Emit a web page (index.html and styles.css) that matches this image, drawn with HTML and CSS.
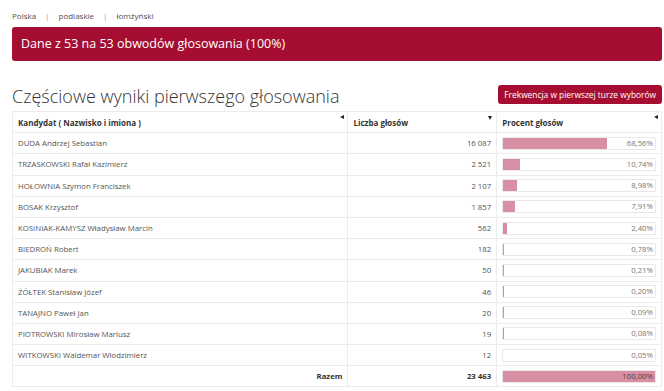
FILE: index.html
```html
<!DOCTYPE html>
<html lang="pl">
<head>
<meta charset="utf-8">
<link rel="stylesheet" href="styles.css">
</head>
<body>
<div class="page">
  <nav class="crumbs"><span>Polska</span><span class="sep">|</span><span>podlaskie</span><span class="sep">|</span><span>łomżyński</span></nav>
  <div class="banner">Dane z 53 na 53 obwodów głosowania (100%)</div>
  <div class="titlebar">
    <h1>Częściowe wyniki pierwszego głosowania</h1>
    <a class="btn">Frekwencja w pierwszej turze wyborów</a>
  </div>
  <table class="results">
    <colgroup><col class="c1"><col class="c2"><col class="c3"></colgroup>
    <thead>
      <tr>
        <th><span>Kandydat ( Nazwisko i imiona )</span><i class="arr left"></i></th>
        <th><span>Liczba głosów</span><i class="arr down"></i></th>
        <th><span>Procent głosów</span><i class="arr left"></i></th>
      </tr>
    </thead>
    <tbody>
      <tr><td>DUDA Andrzej Sebastian</td><td class="num">16 087</td><td><div class="bar"><div class="fill" style="width:68.56%"></div><span>68,56%</span></div></td></tr>
      <tr><td>TRZASKOWSKI Rafał Kazimierz</td><td class="num">2 521</td><td><div class="bar"><div class="fill" style="width:10.74%"></div><span>10,74%</span></div></td></tr>
      <tr><td>HOŁOWNIA Szymon Franciszek</td><td class="num">2 107</td><td><div class="bar"><div class="fill" style="width:8.98%"></div><span>8,98%</span></div></td></tr>
      <tr><td>BOSAK Krzysztof</td><td class="num">1 857</td><td><div class="bar"><div class="fill" style="width:7.91%"></div><span>7,91%</span></div></td></tr>
      <tr><td>KOSINIAK-KAMYSZ Władysław Marcin</td><td class="num">562</td><td><div class="bar"><div class="fill" style="width:2.40%"></div><span>2,40%</span></div></td></tr>
      <tr><td>BIEDROŃ Robert</td><td class="num">182</td><td><div class="bar"><div class="fill" style="width:0.78%"></div><span>0,78%</span></div></td></tr>
      <tr><td>JAKUBIAK Marek</td><td class="num">50</td><td><div class="bar"><div class="fill" style="width:0.21%"></div><span>0,21%</span></div></td></tr>
      <tr><td>ŻÓŁTEK Stanisław Józef</td><td class="num">46</td><td><div class="bar"><div class="fill" style="width:0.20%"></div><span>0,20%</span></div></td></tr>
      <tr><td>TANAJNO Paweł Jan</td><td class="num">20</td><td><div class="bar"><div class="fill" style="width:0.09%"></div><span>0,09%</span></div></td></tr>
      <tr><td>PIOTROWSKI Mirosław Mariusz</td><td class="num">19</td><td><div class="bar"><div class="fill" style="width:0.08%"></div><span>0,08%</span></div></td></tr>
      <tr><td>WITKOWSKI Waldemar Włodzimierz</td><td class="num">12</td><td><div class="bar"><div class="fill" style="width:0.05%"></div><span>0,05%</span></div></td></tr>
    </tbody>
    <tfoot>
      <tr><td class="num b">Razem</td><td class="num b">23 463</td><td><div class="bar total"><div class="fill" style="width:100%"></div><span>100,00%</span></div></td></tr>
    </tfoot>
  </table>
</div>
</body>
</html>
```
FILE: styles.css
```css
html, body { margin: 0; padding: 0; background: #fff; }
body { font-family: "Open Sans", "Liberation Sans", sans-serif; color: #555; }
.page { padding: 8px 2px 0 12px; }
.crumbs { font-size: 8px; color: #5a4a4e; line-height: 16px; height: 19px; display: flex; }
.crumbs .sep { margin: 0 9px; color: #999; }
.banner {
  background: #a60e31; color: #fff; font-size: 12.5px;
  height: 34px; line-height: 34px; padding: 0 9px;
  border-radius: 3px; box-sizing: border-box;
}
.titlebar { display: flex; align-items: flex-end; justify-content: space-between; margin-top: 23px; height: 27px; }
h1 { margin: 0 0 2px; font-weight: 300; font-size: 18px; color: #333; line-height: 26px; }
.btn {
  background: #a60e31; color: #fff; font-size: 8.4px; border-radius: 3px;
  height: 19px; line-height: 19px; padding: 0 6px; margin-bottom: 7px;
}
.results { width: 650px; border-collapse: collapse; font-size: 7.8px; color: #555; }
col.c1 { width: 336px; }
col.c2 { width: 149px; }
col.c3 { width: 165px; }
.results th, .results td { border: 1px solid #ececec; height: 21.2px; padding: 0 5px; box-sizing: border-box; }
.results th { text-align: left; font-weight: 700; font-size: 8px; color: #333; position: relative; }
.arr { position: absolute; right: 3px; top: 3px; width: 0; height: 0; }
.arr.left { border-top: 2.5px solid transparent; border-bottom: 2.5px solid transparent; border-right: 4px solid #222; }
.arr.down { border-left: 2.5px solid transparent; border-right: 2.5px solid transparent; border-top: 4px solid #222; right: 4px; top: 4px; }
.num { text-align: right; }
.b { font-weight: 700; color: #333; }
.bar { position: relative; height: 13px; border: 1px solid #e8e8e8; box-sizing: border-box; border-radius: 1px; }
.fill { height: 100%; background: #d98fa3; }
.bar span { position: absolute; right: 2px; top: 0; line-height: 11px; color: #777; }
.bar.total span { color: #444; }
```
